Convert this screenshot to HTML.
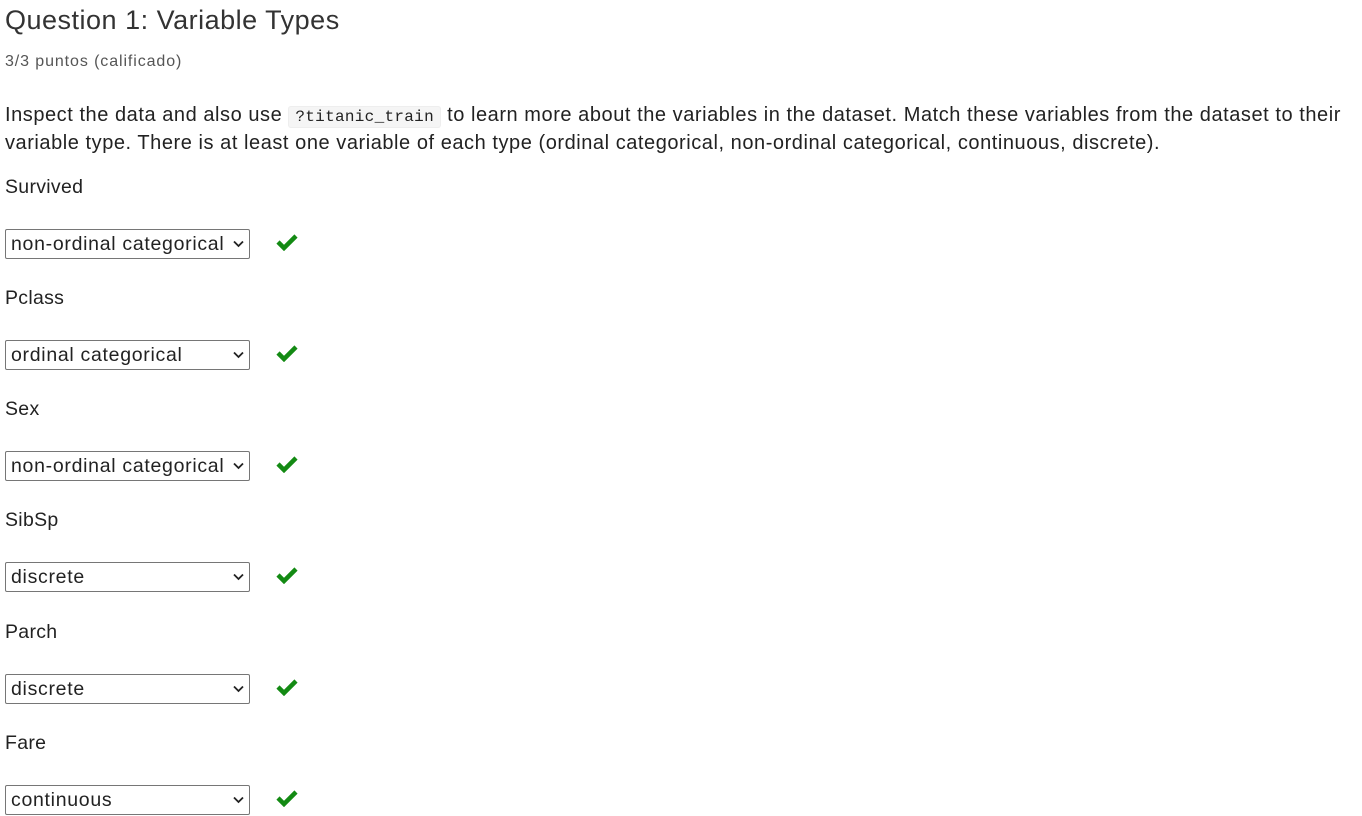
<!DOCTYPE html>
<html><head><meta charset="utf-8"><style>
body{margin:0;background:#fff;font-family:"Liberation Sans",sans-serif;color:#222;width:1362px;height:816px;overflow:hidden;position:relative}
.a{position:absolute;white-space:nowrap}
h1{position:absolute;left:5px;top:3px;margin:0;font-weight:normal;font-size:27px;letter-spacing:0.5px;color:#333;line-height:34px}
.sub{left:5px;top:53px;font-size:16px;letter-spacing:0.9px;color:#555}
.p{left:5px;font-size:20px;letter-spacing:0.55px;line-height:28px;color:#222}
code{font-family:"Liberation Mono",monospace;font-size:16px;letter-spacing:0.3px;background:#f5f5f5;border:1px solid #eee;border-radius:3px;padding:1px 6px;color:#222}
.lab{left:5px;font-size:19.5px;letter-spacing:0.3px;color:#222}
.sel{position:absolute;left:5px;width:245px;height:30px;border:1px solid #767676;border-radius:2px;box-sizing:border-box;font-size:19.5px;letter-spacing:0.7px;line-height:28px;padding-left:5px;color:#222}
.sel svg{position:absolute;right:5px;top:10px}
.ck{position:absolute;left:276px}
</style></head><body>
<h1>Question 1: Variable Types</h1>
<div class="a sub">3/3 puntos (calificado)</div>
<div class="a p" style="top:101px">Inspect the data and also use <code>?titanic_train</code> to learn more about the variables in the dataset. Match these variables from the dataset to their</div>
<div class="a p" style="top:129px">variable type. There is at least one variable of each type (ordinal categorical, non-ordinal categorical, continuous, discrete).</div>

<div class="a lab" style="top:176px">Survived</div>
<div class="sel" style="top:229px">non-ordinal categorical<svg width="11" height="8" viewBox="0 0 11 8"><path d="M1 1.5l4.5 4.5 4.5-4.5" stroke="#222" stroke-width="1.8" fill="none"/></svg></div>
<svg class="ck" style="top:233px" width="22" height="18" viewBox="0 0 22 18"><path d="M2 9l6 6L20 3" stroke="#138a13" stroke-width="4.5" fill="none"/></svg>

<div class="a lab" style="top:287px">Pclass</div>
<div class="sel" style="top:340px">ordinal categorical<svg width="11" height="8" viewBox="0 0 11 8"><path d="M1 1.5l4.5 4.5 4.5-4.5" stroke="#222" stroke-width="1.8" fill="none"/></svg></div>
<svg class="ck" style="top:344px" width="22" height="18" viewBox="0 0 22 18"><path d="M2 9l6 6L20 3" stroke="#138a13" stroke-width="4.5" fill="none"/></svg>

<div class="a lab" style="top:398px">Sex</div>
<div class="sel" style="top:451px">non-ordinal categorical<svg width="11" height="8" viewBox="0 0 11 8"><path d="M1 1.5l4.5 4.5 4.5-4.5" stroke="#222" stroke-width="1.8" fill="none"/></svg></div>
<svg class="ck" style="top:455px" width="22" height="18" viewBox="0 0 22 18"><path d="M2 9l6 6L20 3" stroke="#138a13" stroke-width="4.5" fill="none"/></svg>

<div class="a lab" style="top:509px">SibSp</div>
<div class="sel" style="top:562px">discrete<svg width="11" height="8" viewBox="0 0 11 8"><path d="M1 1.5l4.5 4.5 4.5-4.5" stroke="#222" stroke-width="1.8" fill="none"/></svg></div>
<svg class="ck" style="top:566px" width="22" height="18" viewBox="0 0 22 18"><path d="M2 9l6 6L20 3" stroke="#138a13" stroke-width="4.5" fill="none"/></svg>

<div class="a lab" style="top:621px">Parch</div>
<div class="sel" style="top:674px">discrete<svg width="11" height="8" viewBox="0 0 11 8"><path d="M1 1.5l4.5 4.5 4.5-4.5" stroke="#222" stroke-width="1.8" fill="none"/></svg></div>
<svg class="ck" style="top:678px" width="22" height="18" viewBox="0 0 22 18"><path d="M2 9l6 6L20 3" stroke="#138a13" stroke-width="4.5" fill="none"/></svg>

<div class="a lab" style="top:732px">Fare</div>
<div class="sel" style="top:785px">continuous<svg width="11" height="8" viewBox="0 0 11 8"><path d="M1 1.5l4.5 4.5 4.5-4.5" stroke="#222" stroke-width="1.8" fill="none"/></svg></div>
<svg class="ck" style="top:789px" width="22" height="18" viewBox="0 0 22 18"><path d="M2 9l6 6L20 3" stroke="#138a13" stroke-width="4.5" fill="none"/></svg>
</body></html>
